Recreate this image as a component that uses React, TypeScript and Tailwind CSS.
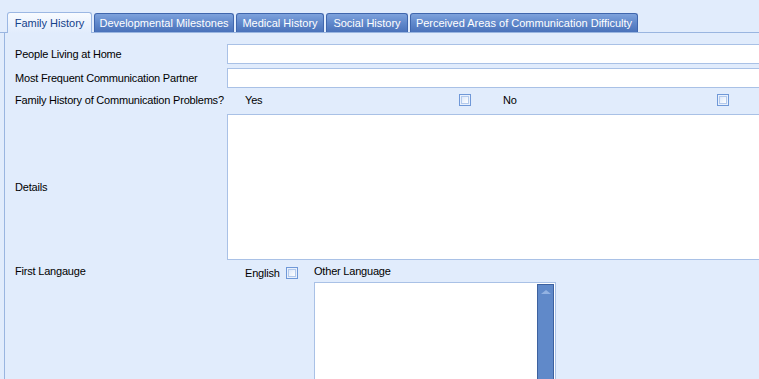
import React from 'react'

const font = { fontFamily: '"Liberation Sans", Arial, sans-serif' }

function Tab({ label, active, w }: { label: string; active?: boolean; w: string }) {
  if (active) {
    return (
      <div className={`${w} shrink-0 h-[21px] -mb-px rounded-t-[3px] border border-b-0 border-[#9bb7e3] bg-gradient-to-b from-[#f8fbff] to-[#e1ecfc] flex items-center justify-center whitespace-nowrap text-[11px] text-[#15428b]`}>
        {label}
      </div>
    )
  }
  return (
    <div className={`${w} shrink-0 h-[19px] rounded-t-[3px] border border-b-0 border-[#3f66ad] bg-gradient-to-b from-[#7ea2dc] via-[#6088cb] to-[#4a72ba] flex items-center justify-center whitespace-nowrap text-[11px] text-white`}>
      {label}
    </div>
  )
}

function Check() {
  return (
    <div className="shrink-0 w-[12px] h-[12px] border border-[#6f98d8] p-[1px] bg-[#e8f0fc]">
      <div className="w-full h-full border border-[#b2c9ec] bg-gradient-to-br from-[#dce8fa] to-[#ffffff]" />
    </div>
  )
}

export default function App() {
  return (
    <div className="w-[759px] h-[379px] overflow-hidden bg-[#e1ecfc] text-[11px] text-black whitespace-nowrap" style={font}>
      <div className="flex items-end h-[33px] pl-[7px] gap-[2px] border-b border-[#99b5e0]">
        <Tab label="Family History" active w="w-[85px]" />
        <Tab label="Developmental Milestones" w="w-[140px]" />
        <Tab label="Medical History" w="w-[88px]" />
        <Tab label="Social History" w="w-[82px]" />
        <Tab label="Perceived Areas of Communication Difficulty" w="w-[228px]" />
      </div>
      <div className="ml-[4px] border-l border-[#99b5e0] pl-[10px] pt-[11px] w-[820px] h-[400px] flex flex-col tracking-[-0.2px]">
        <div className="flex items-center h-[20px]">
          <div className="w-[212px] shrink-0">People Living at Home</div>
          <div className="flex-1 h-[20px] border border-[#a9c1e6] bg-white" />
        </div>
        <div className="flex items-center h-[20px] mt-[4px]">
          <div className="w-[212px] shrink-0">Most Frequent Communication Partner</div>
          <div className="flex-1 h-[20px] border border-[#a9c1e6] bg-white" />
        </div>
        <div className="flex items-center h-[16px] mt-[4px]">
          <div className="w-[212px] shrink-0 pt-[1px]">Family History of Communication Problems?</div>
          <div className="w-[258px] shrink-0 flex items-center pl-[18px]">
            <span className="w-[214px] shrink-0">Yes</span>
            <Check />
          </div>
          <div className="w-[258px] shrink-0 flex items-center pl-[18px]">
            <span className="w-[214px] shrink-0">No</span>
            <Check />
          </div>
        </div>
        <div className="flex items-center h-[146px] mt-[6px]">
          <div className="w-[212px] shrink-0">Details</div>
          <div className="flex-1 h-[146px] border border-[#a9c1e6] bg-white" />
        </div>
        <div className="flex items-start mt-[4px]">
          <div className="w-[212px] shrink-0 leading-[14px]">First Langauge</div>
          <div className="w-[71px] shrink-0 h-[12px] mt-[3px] flex items-center pl-[18px]">
            <span className="w-[41px] shrink-0 pt-[1px]">English</span>
            <Check />
          </div>
          <div className="flex flex-col pl-[16px]">
            <div className="h-[18px] leading-[14px]">Other Language</div>
            <div className="w-[242px] h-[120px] border border-[#a9c1e6] bg-white flex justify-end p-[1px]">
              <div className="w-[17px] h-full border border-[#3d619f] bg-[#6089c9] flex justify-center pt-[5px]">
                <div className="w-0 h-0 border-l-[5px] border-r-[5px] border-b-[4px] border-l-transparent border-r-transparent border-b-[#93b2e2]" />
              </div>
            </div>
          </div>
        </div>
      </div>
    </div>
  )
}
